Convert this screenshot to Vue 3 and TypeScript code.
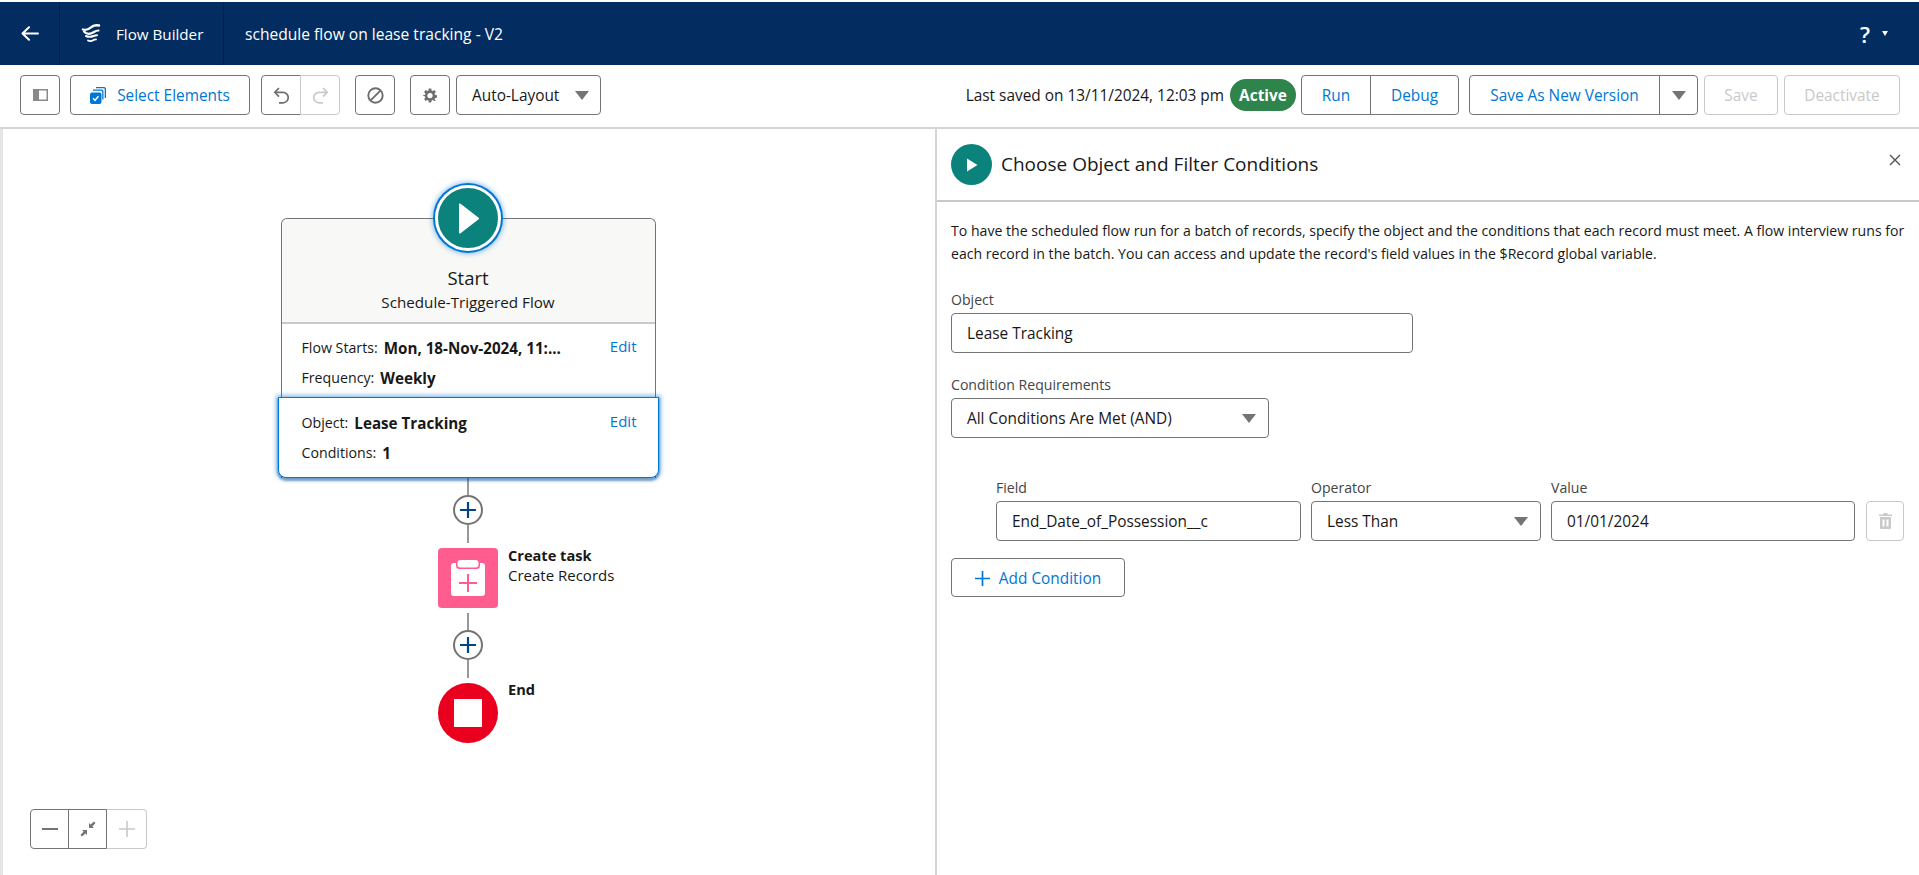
<script setup lang="ts">
interface Line {
  label: string
  value: string
}

const scheduleLines: Line[] = [
  { label: 'Flow Starts:', value: 'Mon, 18-Nov-2024, 11:...' },
  { label: 'Frequency:', value: 'Weekly' },
]

const objectLines: Line[] = [
  { label: 'Object:', value: 'Lease Tracking' },
  { label: 'Conditions:', value: '1' },
]
</script>

<template>
  <div class="page">
    <header class="topbar">
      <div class="back">
        <svg width="18" height="15" viewBox="0 0 18 15" fill="none" stroke="#fff" stroke-width="2" stroke-linecap="round" stroke-linejoin="round">
          <path d="M1.500 7.500h15.500M8 1.200 1.500 7.500 8 13.800" />
        </svg>
      </div>
      <div class="app-name">
        <svg width="20" height="19" viewBox="0 0 20 19" fill="none" stroke="#fff" stroke-linecap="round">
          <path stroke-width="2.400" d="M2 5.500c4 1.500 6-.5 8.500-2.500 2-1.500 5-2 7.500-1.500" />
          <path stroke-width="2.200" d="M3 7.500c3 3.500 7 2.500 10 .5 1.500-1 3-1.500 4.500-1.500" />
          <path stroke-width="2" d="M5 12c3 1.500 5 1 7.500 0 1.200-.5 2.500-.8 3.500-.8" />
          <path stroke-width="1.800" d="M7 16.500c2 1 4 .5 5.500-.5 .8-.5 1.500-.6 2.500-.6" />
        </svg>
        <span>Flow Builder</span>
      </div>
      <div class="flow-title">schedule flow on lease tracking - V2</div>
      <div class="help">
        <span class="help-mark">?</span>
        <span class="help-caret"></span>
      </div>
    </header>

    <div class="toolbar">
      <div class="tools-left">
        <button class="btn icon-btn">
          <svg width="15" height="12" viewBox="0 0 15 12">
            <rect x=".75" y=".75" width="13.500" height="10.500" fill="none" stroke="#8a8a8a" stroke-width="1.500" />
            <rect x="1" y="1" width="5" height="10" fill="#8a8a8a" />
          </svg>
        </button>
        <button class="btn select-btn">
          <svg width="16" height="17" viewBox="0 0 16 17">
            <path d="M6 0h8a2 2 0 0 1 2 2v9h-1.300V2.300a1 1 0 0 0-1-1H6z" fill="#0176d3" />
            <path d="M3 2.500h8.500a2 2 0 0 1 2 2v8h-1.300V4.800a1 1 0 0 0-1-1H3z" fill="#0176d3" />
            <rect y="5.500" width="11.500" height="11.500" rx="2" fill="#0176d3" />
            <path d="M3 11.300l2 2 3.500-4" fill="none" stroke="#fff" stroke-width="1.500" />
          </svg>
          <span>Select Elements</span>
        </button>
        <div class="btn-group">
          <button class="btn icon-btn">
            <svg width="17" height="17" viewBox="0 0 17 17" fill="none" stroke="#706e6b" stroke-width="1.700">
              <path d="M6 1 1.800 5.300 6 9.600" />
              <path d="M2.500 5.300H10a5 5 0 0 1 0 10.500H6" />
            </svg>
          </button>
          <button class="btn icon-btn is-off">
            <svg width="17" height="17" viewBox="0 0 17 17" fill="none" stroke="#c9c9c9" stroke-width="1.700">
              <path d="M11 1l4.200 4.300L11 9.600" />
              <path d="M14.500 5.300H7a5 5 0 0 0 0 10.500h4" />
            </svg>
          </button>
        </div>
        <button class="btn icon-btn ban">
          <svg width="17" height="17" viewBox="0 0 17 17" fill="none" stroke="#706e6b" stroke-width="1.900">
            <circle cx="8.500" cy="8.500" r="7.200" />
            <path d="M3.600 13.400l9.800-9.800" />
          </svg>
        </button>
        <button class="btn icon-btn gear">
          <svg width="14" height="15" viewBox="0 0 16 16">
            <path fill="#706e6b" fill-rule="evenodd" d="M6.600 0h2.800l.4 2.200 1.300.6L13 1.600l1.700 2.400-1.400 1.600.3 1.400 2.400.8v2.600l-2.400.8-.3 1.400 1.400 1.600L13 14.400l-1.900-1.200-1.300.6-.4 2.200H6.600l-.4-2.200-1.300-.6L3 14.400 1.300 12l1.400-1.600-.3-1.400L0 8.200V7.600l2.400-.6.300-1.400L1.300 4 3 1.600l1.900 1.200 1.300-.6zM8 5a3 3 0 1 0 0 6 3 3 0 0 0 0-6z" />
          </svg>
        </button>
        <button class="btn layout-btn">
          <span>Auto-Layout</span>
          <span class="caret"></span>
        </button>
      </div>

      <div class="tools-right">
        <span class="saved">Last saved on 13/11/2024, 12:03 pm</span>
        <span class="badge">Active</span>
        <div class="btn-group">
          <button class="btn text-btn run">Run</button>
          <button class="btn text-btn debug">Debug</button>
        </div>
        <div class="btn-group save-group">
          <button class="btn text-btn save-new">Save As New Version</button>
          <button class="btn text-btn save-caret"><span class="caret"></span></button>
        </div>
        <button class="btn text-btn is-off save">Save</button>
        <button class="btn text-btn is-off deactivate">Deactivate</button>
      </div>
    </div>

    <main class="workspace">
      <section class="canvas">
        <div class="start-wrap">
          <div class="start-icon">
            <svg width="20" height="31" viewBox="0 0 20 31">
              <path d="M0 1.500v28a1 1 0 0 0 1.600.8l18-14a1 1 0 0 0 0-1.600l-18-14A1 1 0 0 0 0 1.500z" fill="#fff" />
            </svg>
          </div>
          <div class="start-card">
            <div class="card-head">
              <div class="start-name">Start</div>
              <div class="start-type">Schedule-Triggered Flow</div>
            </div>
            <div class="card-block">
              <a class="edit">Edit</a>
              <div v-for="line in scheduleLines" :key="line.label" class="card-line">
                <span class="line-label">{{ line.label }}</span>
                <b class="line-value">{{ line.value }}</b>
              </div>
            </div>
            <div class="card-block selected">
              <a class="edit">Edit</a>
              <div v-for="line in objectLines" :key="line.label" class="card-line">
                <span class="line-label">{{ line.label }}</span>
                <b class="line-value">{{ line.value }}</b>
              </div>
            </div>
          </div>
        </div>

        <div class="wire first"></div>
        <div class="add-node">
          <svg width="18" height="18" viewBox="0 0 18 18" stroke="#014486" stroke-width="2.200">
            <path d="M9 1v16M1 9h16" />
          </svg>
        </div>
        <div class="wire second"></div>
        <div class="node task-node">
          <svg width="34" height="36" viewBox="0 0 34 36">
            <path fill="#fff" d="M5 3v2.500A3.500 3.500 0 0 0 8.500 9h17A3.500 3.500 0 0 0 29 5.500V3h2a3 3 0 0 1 3 3v27a3 3 0 0 1-3 3H3a3 3 0 0 1-3-3V6a3 3 0 0 1 3-3z" />
            <rect x="6.500" y="0" width="21" height="7.500" rx="3" fill="#fff" />
            <path d="M17 14v18M8 23h18" stroke="#ff5d8f" stroke-width="2" />
          </svg>
          <div class="node-text">
            <b>Create task</b>
            <span>Create Records</span>
          </div>
        </div>
        <div class="wire third"></div>
        <div class="add-node">
          <svg width="18" height="18" viewBox="0 0 18 18" stroke="#014486" stroke-width="2.200">
            <path d="M9 1v16M1 9h16" />
          </svg>
        </div>
        <div class="wire fourth"></div>
        <div class="node end-node">
          <div class="end-square"></div>
          <div class="node-text end-text"><b>End</b></div>
        </div>

        <div class="zoom-box">
          <button class="zoom-btn">
            <svg width="16" height="2" viewBox="0 0 16 2"><path d="M0 1h16" stroke="#747474" stroke-width="2" /></svg>
          </button>
          <button class="zoom-btn">
            <svg width="16" height="16" viewBox="0 0 16 16" fill="#747474">
              <path d="M9 7V2l1.600 1.600L14 .5l1.500 1.500-3.100 3.400L14 7zM7 9v5l-1.600-1.600L2 15.500.5 14l3.100-3.400L2 9z" />
            </svg>
          </button>
          <button class="zoom-btn off">
            <svg width="16" height="16" viewBox="0 0 16 16"><path d="M8 0v16M0 8h16" stroke="#c9c9c9" stroke-width="1.600" /></svg>
          </button>
        </div>
      </section>

      <aside class="panel">
        <div class="panel-head">
          <div class="panel-icon">
            <svg width="11" height="14" viewBox="0 0 11 14"><path d="M0 .5v13L10.500 7z" fill="#fff" /></svg>
          </div>
          <h2>Choose Object and Filter Conditions</h2>
          <svg class="close" width="12" height="12" viewBox="0 0 12 12" stroke="#54524f" stroke-width="1.400"><path d="M1 1l10 10M11 1 1 11" /></svg>
        </div>
        <div class="panel-body">
          <p class="intro">To have the scheduled flow run for a batch of records, specify the object and the conditions that each record must meet. A flow interview runs for each record in the batch. You can access and update the record's field values in the $Record global variable.</p>

          <label class="field-label object-label">Object</label>
          <div class="input object-input">Lease Tracking</div>

          <label class="field-label req-label">Condition Requirements</label>
          <div class="input select req-select">
            <span>All Conditions Are Met (AND)</span>
            <span class="caret"></span>
          </div>

          <div class="condition">
            <div class="cond-col field-col">
              <label class="field-label">Field</label>
              <div class="input">End_Date_of_Possession__c</div>
            </div>
            <div class="cond-col op-col">
              <label class="field-label">Operator</label>
              <div class="input select">
                <span>Less Than</span>
                <span class="caret"></span>
              </div>
            </div>
            <div class="cond-col value-col">
              <label class="field-label">Value</label>
              <div class="input">01/01/2024</div>
            </div>
            <button class="btn is-off trash">
              <svg width="13" height="16" viewBox="0 0 13 16" fill="#c9c9c9">
                <path d="M4.500 0h4v1.500h4.500V3H0V1.500h4.500z" />
                <path fill-rule="evenodd" d="M1 4h11v11a1 1 0 0 1-1 1H2a1 1 0 0 1-1-1zm2.500 2.500v7H5.500v-7zm4 0v7h2v-7z" />
              </svg>
            </button>
          </div>

          <button class="btn add-btn">
            <svg width="15" height="15" viewBox="0 0 15 15" stroke="#0176d3" stroke-width="1.700"><path d="M7.500 0v15M0 7.500h15" /></svg>
            <span>Add Condition</span>
          </button>
        </div>
      </aside>
    </main>
  </div>
</template>

<style>
html,
body {
  margin: 0;
  background: #fff;
}
</style>

<style scoped>
.page {
  width: 1919px;
  height: 875px;
  overflow: hidden;
  display: flex;
  flex-direction: column;
  font-family: "Open Sans", "Liberation Sans", sans-serif;
  font-size: 15.4px;
  color: #181818;
  background: #fff;
}

button {
  font-family: inherit;
}

/* top bar */
.topbar {
  height: 63px;
  margin-top: 2px;
  flex: none;
  display: flex;
  align-items: center;
  background: #032d60;
  color: #fff;
}

.back {
  width: 60px;
  height: 100%;
  display: flex;
  align-items: center;
  justify-content: center;
  box-sizing: border-box;
  border-right: 1px solid #021f44;
}

.app-name {
  width: 164px;
  height: 100%;
  box-sizing: border-box;
  padding-left: 21px;
  display: flex;
  align-items: center;
  gap: 15px;
  border-right: 1px solid #021f44;
  font-size: 15.2px;
}

.flow-title {
  margin-left: 21px;
  font-size: 15.6px;
  flex: 1;
}

.help {
  display: flex;
  align-items: center;
  gap: 12px;
  padding-right: 31px;
}

.help-mark {
  font-size: 22px;
  font-weight: 600;
}

.help-caret {
  border: 3.5px solid transparent;
  border-top: 5px solid #fff;
  border-bottom: 0;
}

/* toolbar */
.toolbar {
  height: 64px;
  flex: none;
  box-sizing: border-box;
  display: flex;
  align-items: center;
  justify-content: space-between;
  padding: 0 19px 2px 20px;
  border-bottom: 2px solid #d4d4d4;
}

.tools-left,
.tools-right {
  display: flex;
  align-items: center;
}

.btn {
  box-sizing: border-box;
  height: 40px;
  background: #fff;
  border: 1px solid #747474;
  border-radius: 4px;
  padding: 0;
  display: flex;
  align-items: center;
  justify-content: center;
  font-size: 15.4px;
  color: #0176d3;
}

.icon-btn {
  width: 40px;
}

.select-btn {
  width: 180px;
  margin: 0 11px 0 10px;
  gap: 11px;
}

.btn-group {
  display: flex;
}

.btn-group .btn:first-child {
  border-radius: 4px 0 0 4px;
}

.btn-group .btn:last-child {
  border-radius: 0 4px 4px 0;
  margin-left: -1px;
}

.is-off {
  border-color: #c9c9c9;
  color: #c9c9c9;
}

.ban {
  margin-left: 15px;
}

.gear {
  margin-left: 15px;
}

.layout-btn {
  width: 145px;
  margin-left: 6px;
  color: #181818;
  justify-content: space-between;
  padding: 0 11px 0 15px;
}

.caret {
  flex: none;
  width: 0;
  height: 0;
  border-left: 7.25px solid transparent;
  border-right: 7.25px solid transparent;
  border-top: 9px solid #747474;
}

.saved {
  margin-right: 6px;
}

.badge {
  box-sizing: border-box;
  width: 66px;
  height: 32px;
  border-radius: 16px;
  background: #2e844a;
  color: #fff;
  font-weight: 700;
  display: flex;
  align-items: center;
  justify-content: center;
  margin-right: 5px;
}

.run {
  width: 70px;
}

.debug {
  width: 89px;
}

.save-group {
  margin-left: 10px;
}

.save-new {
  width: 191px;
}

.save-caret {
  width: 39px;
}

.save {
  width: 74px;
  margin-left: 6px;
}

.deactivate {
  width: 116px;
  margin-left: 6px;
}

/* canvas */
.workspace {
  flex: 1;
  min-height: 0;
  display: flex;
}

.canvas {
  position: relative;
  width: 935px;
  flex: none;
  box-sizing: border-box;
  border-left: 3px solid #e5e5e5;
  padding: 89px 2px 0 0;
  display: flex;
  flex-direction: column;
  align-items: center;
}

.start-wrap {
  position: relative;
}

.start-icon {
  position: absolute;
  z-index: 2;
  left: 50%;
  top: -33px;
  margin-left: -33px;
  width: 66px;
  height: 66px;
  box-sizing: border-box;
  border-radius: 50%;
  border: 3px solid #fff;
  background: #0b827c;
  box-shadow: 0 0 0 2px #0176d3, 0 0 5px 3px rgba(1, 118, 211, 0.45);
  display: flex;
  align-items: center;
  justify-content: center;
  padding-left: 2px;
}

.start-card {
  width: 375px;
  box-sizing: border-box;
  border: 1px solid #747474;
  border-bottom: 0;
  border-radius: 6px 6px 0 0;
}

.card-head {
  height: 105px;
  box-sizing: border-box;
  padding-top: 47px;
  background: #f8f8f6;
  border-radius: 6px 6px 0 0;
  border-bottom: 2px solid #c9c9c9;
  text-align: center;
}

.start-name {
  font-size: 18.5px;
  line-height: 24px;
}

.start-type {
  font-size: 15.2px;
  line-height: 24px;
}

.card-block {
  position: relative;
  height: 73px;
  box-sizing: border-box;
  padding: 13px 20px 0;
  font-size: 14.2px;
}

.card-block.selected {
  height: 81px;
  width: 381px;
  margin-left: -4px;
  margin-right: -4px;
  background: #fff;
  border: 1px solid #0176d3;
  border-radius: 0 0 8px 8px;
  padding: 14px 23px 0;
  box-shadow: 0 0 4px 2px rgba(1, 118, 211, 0.45), 0 2px 2px 1px rgba(3, 45, 96, 0.35);
}

.card-line {
  display: flex;
  gap: 6px;
  height: 30px;
  line-height: 22px;
}

.line-value {
  font-size: 15.2px;
  font-weight: 700;
  white-space: nowrap;
}

.edit {
  position: absolute;
  top: 11px;
  right: 18px;
  color: #0176d3;
  font-size: 15px;
  line-height: 22px;
}

.selected .edit {
  right: 21px;
  top: 12px;
}

.wire {
  width: 2.5px;
  background: #999;
  flex: none;
}

.wire.first {
  height: 17px;
}

.wire.second {
  height: 18px;
}

.wire.third {
  margin-top: 5px;
  height: 17px;
}

.wire.fourth {
  height: 18px;
}

.add-node {
  width: 30px;
  height: 30px;
  flex: none;
  box-sizing: border-box;
  border: 2px solid #747474;
  border-radius: 50%;
  display: flex;
  align-items: center;
  justify-content: center;
  background: #fff;
}

.node {
  position: relative;
  flex: none;
  width: 60px;
  height: 60px;
  display: flex;
  align-items: center;
  justify-content: center;
  margin-top: 5px;
}

.task-node {
  background: #ff5d8f;
  border-radius: 4px;
}

.end-node {
  background: #ea001e;
  border-radius: 50%;
}

.end-square {
  width: 28px;
  height: 28px;
  background: #fff;
}

.node-text {
  position: absolute;
  left: 70px;
  top: -3px;
  display: flex;
  flex-direction: column;
  white-space: nowrap;
  line-height: 20px;
  font-size: 15px;
}

.node-text b {
  font-size: 14.6px;
}

.end-text {
  top: -4px;
}

.zoom-box {
  position: absolute;
  left: 27px;
  bottom: 26px;
  display: flex;
}

.zoom-btn {
  width: 39px;
  height: 40px;
  box-sizing: border-box;
  background: #fff;
  border: 1px solid #747474;
  margin-left: -1px;
  padding: 0;
  display: flex;
  align-items: center;
  justify-content: center;
}

.zoom-btn:first-child {
  border-radius: 4px 0 0 4px;
  margin-left: 0;
}

.zoom-btn.off {
  width: 41px;
  border-color: #c9c9c9;
  border-left-color: #747474;
  border-radius: 0 4px 4px 0;
}

/* property panel */
.panel {
  flex: 1;
  min-width: 0;
  box-sizing: border-box;
  border-left: 2px solid #d4d4d4;
}

.panel-head {
  position: relative;
  height: 73px;
  box-sizing: border-box;
  padding: 15px 0 0 14px;
  display: flex;
  gap: 9px;
  border-bottom: 2px solid #c9c9c9;
}

.panel-icon {
  width: 41px;
  height: 41px;
  border-radius: 50%;
  background: #0b827c;
  display: flex;
  align-items: center;
  justify-content: center;
  padding-left: 2px;
  box-sizing: border-box;
}

.panel-head h2 {
  margin: 0;
  font-size: 19px;
  font-weight: 400;
  line-height: 41px;
}

.close {
  position: absolute;
  right: 18px;
  top: 25px;
}

.panel-body {
  padding: 17px 0 0 14px;
}

.intro {
  margin: 0;
  width: 965px;
  font-size: 14.1px;
  line-height: 23px;
}

.field-label {
  display: block;
  font-size: 14.1px;
  line-height: 18px;
  color: #444;
}

.object-label {
  margin-top: 26px;
}

.input {
  box-sizing: border-box;
  height: 40px;
  margin-top: 4px;
  padding: 1px 12px 0 15px;
  border: 1px solid #747474;
  border-radius: 4px;
  display: flex;
  align-items: center;
  line-height: 1;
}

.object-input {
  width: 462px;
}

.req-label {
  margin-top: 23px;
}

.req-select {
  width: 318px;
}

.select {
  justify-content: space-between;
}

.condition {
  display: flex;
  align-items: flex-end;
  margin: 41px 0 0 45px;
}

.field-col {
  width: 305px;
}

.op-col {
  width: 230px;
  margin-left: 10px;
}

.value-col {
  width: 304px;
  margin-left: 10px;
}

.trash {
  width: 38px;
  margin-left: 11px;
}

.add-btn {
  width: 174px;
  height: 39px;
  margin-top: 17px;
  padding-top: 1px;
  gap: 9px;
}
</style>
